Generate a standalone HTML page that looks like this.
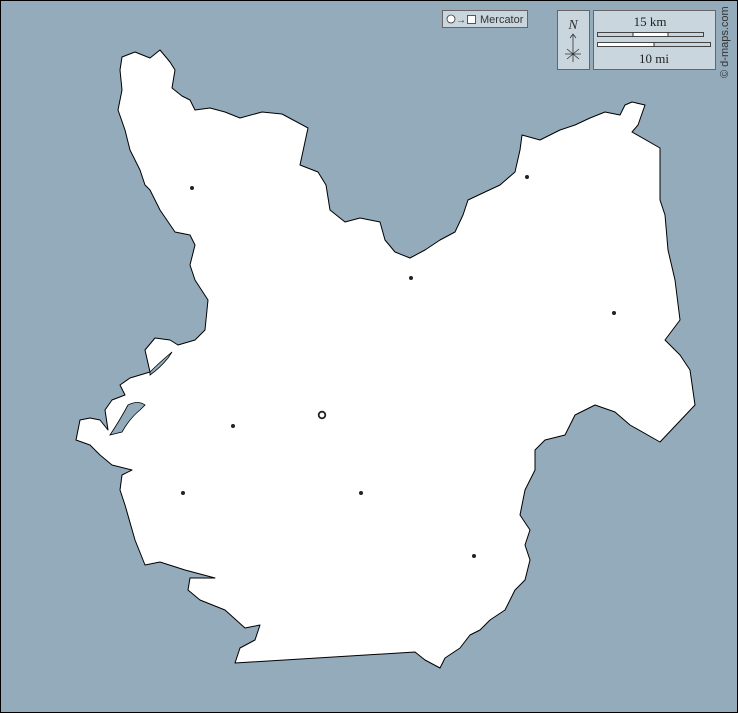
<!DOCTYPE html>
<html><head><style>
body{margin:0;width:738px;height:713px;overflow:hidden;background:#94abbb;font-family:"Liberation Serif",serif}
</style></head><body>
<svg width="738" height="713" viewBox="0 0 738 713" xmlns="http://www.w3.org/2000/svg" style="position:absolute;left:0;top:0">
<rect x="0.5" y="0.5" width="737" height="712" fill="#94abbb" stroke="#000"/>
<polygon fill="#fff" stroke="#000" stroke-width="1" stroke-linejoin="round" points="122,57 135,52 150,58 160,50 170,62 175,70 172,88 182,96 190,100 195,110 210,108 225,112 240,118 262,112 282,114 308,128 300,165 318,172 326,185 330,210 345,222 360,218 380,222 385,240 395,252 410,258 425,250 440,240 455,232 463,215 468,200 485,192 500,185 515,172 520,150 522,135 540,140 560,130 575,125 590,118 605,112 620,115 625,105 632,102 645,105 638,125 632,132 660,148 660,200 665,215 668,250 675,280 680,320 665,340 680,355 690,370 695,405 660,442 630,425 615,412 595,405 575,415 565,435 545,440 535,450 535,470 525,490 520,515 530,530 525,545 530,560 525,580 515,590 505,610 490,620 480,630 470,635 460,648 445,658 440,668 425,660 415,652 235,663 240,648 255,640 260,625 245,628 225,610 200,600 188,590 190,578 215,578 185,570 160,562 145,565 135,540 125,505 120,490 122,475 132,470 112,465 100,455 90,445 76,440 80,420 90,418 100,420 108,430 105,410 112,400 125,395 120,385 130,378 150,372 145,350 155,338 170,340 178,345 195,340 205,330 208,300 195,280 190,265 195,245 190,235 175,232 160,210 150,190 145,185 140,170 130,150 125,130 118,110 122,90 120,70"/>
<path d="M110,435 Q120,420 128,405 Q138,400 145,405 L140,410 Q130,418 122,432 Z M150,372 Q160,362 172,352 L168,358 Q160,368 150,375 Z" fill="#94abbb" stroke="#000" stroke-width="0.8"/>
<g fill="#222">
<circle cx="192" cy="188" r="2"/><circle cx="527" cy="177" r="2"/><circle cx="411" cy="278" r="2"/><circle cx="614" cy="313" r="2"/><circle cx="233" cy="426" r="2"/><circle cx="183" cy="493" r="2"/><circle cx="361" cy="493" r="2"/><circle cx="474" cy="556" r="2"/>
</g>
<circle cx="322" cy="415" r="3.3" fill="#fff" stroke="#222" stroke-width="1.8"/>
<rect x="442.5" y="10.5" width="85" height="17" fill="#c9d6de" stroke="#666"/>
<circle cx="451" cy="19" r="4" fill="#fff" stroke="#333" stroke-width="0.8"/>
<text x="456" y="23" font-family="Liberation Sans" font-size="10" fill="#333">→</text>
<rect x="467.5" y="15.5" width="8" height="8" fill="#fff" stroke="#333" stroke-width="0.8"/>
<text x="480" y="23" font-family="Liberation Sans" font-size="11" fill="#333">Mercator</text>
<rect x="557.5" y="10.5" width="32" height="59" fill="#c9d6de" stroke="#666"/>
<text x="573" y="29" text-anchor="middle" font-size="14" font-style="italic" fill="#333">N</text>
<path d="M573,35 L573,62 M570,38 L573,34 L576,38 M565,54 L581,54 M567,49 L579,59 M579,49 L567,59" stroke="#333" stroke-width="0.8" fill="none"/>
<rect x="593.5" y="10.5" width="122" height="59" fill="#c9d6de" stroke="#666"/>
<text x="650" y="26" text-anchor="middle" font-size="13" fill="#222">15 km</text>
<rect x="597.5" y="32.5" width="106" height="4" fill="#fff" stroke="#444" stroke-width="1"/>
<rect x="598" y="33" width="35" height="3" fill="#c9d6de"/>
<rect x="668" y="33" width="35" height="3" fill="#c9d6de"/>
<path d="M633,32 v5 M668,32 v5" stroke="#333"/>
<rect x="597.5" y="42.5" width="113" height="4" fill="#fff" stroke="#444" stroke-width="1"/>
<rect x="654" y="43" width="56" height="3" fill="#c9d6de"/>
<path d="M654,42 v5" stroke="#333"/>
<text x="654" y="63" text-anchor="middle" font-size="13" fill="#222">10 mi</text>
<text transform="translate(728,78) rotate(-90)" font-family="Liberation Sans" font-size="11" fill="#333">© d-maps.com</text>
</svg>
</body></html>
